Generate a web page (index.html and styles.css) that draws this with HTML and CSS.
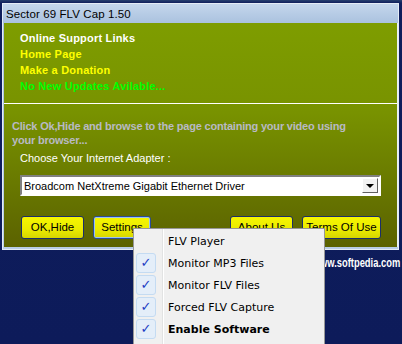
FILE: index.html
```html
<!DOCTYPE html>
<html lang="en">
<head>
    <meta charset="UTF-8">
    <title>Sector 69 FLV Cap 1.50</title>
    <link rel="stylesheet" href="styles.css">
</head>
<body>
    <div class="desktop">
        <div class="window">
            <div class="titlebar">Sector 69 FLV Cap 1.50</div>
            <div class="panel">
                <div class="links">
                    <div class="links-title">Online Support Links</div>
                    <div class="link">Home Page</div>
                    <div class="link">Make a Donation</div>
                    <div class="updates">No New Updates Avilable...</div>
                </div>
                <div class="separator"></div>
                <div class="hint">Click Ok,Hide and browse to the page containing your video using<br>your browser...</div>
                <div class="adapter-label">Choose Your Internet Adapter :</div>
                <div class="combo">
                    <span class="combo-text">Broadcom NetXtreme Gigabit Ethernet Driver</span>
                    <span class="combo-arrow"><span class="tri"></span></span>
                </div>
                <div class="buttons">
                    <div class="btn btn-ok">OK,Hide</div>
                    <div class="btn btn-settings focused">Settings</div>
                    <div class="btn btn-about">About Us</div>
                    <div class="btn btn-terms">Terms Of Use</div>
                </div>
            </div>
        </div>
        <div class="watermark-url">www.softpedia.com</div>
        <div class="menu">
            <div class="menu-item"><span class="gutter"></span><span class="label">FLV Player</span></div>
            <div class="menu-item"><span class="gutter"><span class="check">&#10003;</span></span><span class="label">Monitor MP3 Files</span></div>
            <div class="menu-item"><span class="gutter"><span class="check">&#10003;</span></span><span class="label">Monitor FLV Files</span></div>
            <div class="menu-item"><span class="gutter"><span class="check">&#10003;</span></span><span class="label">Forced FLV Capture</span></div>
            <div class="menu-item"><span class="gutter"><span class="check">&#10003;</span></span><span class="label bold">Enable Software</span></div>
            <div class="menu-line"></div>
        </div>
    </div>
</body>
</html>
```

FILE: styles.css
```css
body {
    margin: 0;
    background-color: #0d1b5a;
    font-family: "Liberation Sans", Arial, sans-serif;
    overflow: hidden;
}
.desktop {
    position: relative;
    width: 402px;
    height: 344px;
    padding-top: 3px;
    box-sizing: border-box;
    background: linear-gradient(180deg, #27406e 0, #0f1e5c 3px, #0d1b5a 100%);
}
.window {
    margin-left: 2px;
    width: 394px;
    border: 1px solid #e4ecf6;
    padding: 0 0 2px 1px;
    background: linear-gradient(180deg, #c4d6ec 0, #a9c1de 20px, #b8cde6 100%);
}
.titlebar {
    height: 19px;
    line-height: 20px;
    padding-left: 2px;
    font-size: 11.5px;
    letter-spacing: 0.1px;
    color: #000;
}
.panel {
    height: 224px;
    box-sizing: border-box;
    background: linear-gradient(180deg, #7e9d00 0, #789200 40%, #5b6200 100%);
    border-right: 1px solid #e8f0f8;
}
.links {
    padding: 7px 0 0 16px;
    font-size: 11px;
    font-weight: bold;
    line-height: 16px;
    letter-spacing: 0.2px;
}
.links-title {
    color: #fff;
}
.link {
    color: #ffff00;
}
.updates {
    color: #00ff00;
}
.separator {
    margin-top: 9px;
    height: 1px;
    background-color: #fff;
}
.hint {
    margin: 15px 0 0 8px;
    font-size: 11px;
    font-weight: bold;
    line-height: 14px;
    letter-spacing: -0.2px;
    color: #b9bac4;
    white-space: nowrap;
}
.adapter-label {
    margin: 4px 0 0 16px;
    font-size: 11px;
    line-height: 14px;
    color: #fff;
}
.combo {
    margin: 10px 0 0 16px;
    width: 361px;
    height: 21px;
    box-sizing: border-box;
    background-color: #fff;
    border: 2px solid;
    border-color: #808080 #fff #fff #808080;
    display: flex;
    align-items: center;
    justify-content: space-between;
    padding: 0 1px 0 2px;
}
.combo-text {
    font-size: 11px;
    color: #000;
}
.combo-arrow {
    width: 16px;
    height: 15px;
    box-sizing: border-box;
    background-color: #f2f2f2;
    border: 1px solid;
    border-color: #fff #606060 #606060 #fff;
    display: flex;
    align-items: center;
    justify-content: center;
}
.tri {
    width: 0;
    height: 0;
    border-left: 4px solid transparent;
    border-right: 4px solid transparent;
    border-top: 4px solid #000;
}
.buttons {
    display: flex;
    gap: 9px;
    margin-top: 20px;
    padding: 0 16px 0 17px;
}
.btn {
    height: 23px;
    line-height: 21px;
    box-sizing: border-box;
    text-align: center;
    font-size: 11.5px;
    color: #000;
    background: linear-gradient(180deg, #f6f600 0, #eaea00 60%, #d6d600 100%);
    border: 1px solid #1c2f6a;
    border-radius: 3px;
}
.btn-ok {
    width: 63px;
}
.btn-settings {
    width: 58px;
}
.btn-about {
    width: 63px;
    margin-left: auto;
}
.btn-terms {
    width: 79px;
}
.btn.focused {
    box-shadow: 0 0 0 1px #9cc4ee inset;
    border-color: #2a4a9a;
}
.watermark-url {
    position: absolute;
    right: 2px;
    top: 256px;
    font-family: "Liberation Sans", Arial, sans-serif;
    font-size: 12px;
    font-weight: bold;
    color: #fff;
    transform: scaleX(0.78);
    transform-origin: right center;
}
.menu {
    position: absolute;
    left: 133px;
    top: 228px;
    width: 192px;
    height: 130px;
    box-sizing: border-box;
    padding-top: 1px;
    background-color: #f0f0f0;
    border: 1px solid #979797;
    font-family: "DejaVu Sans", sans-serif;
    font-size: 11px;
    color: #000;
}
.menu-line {
    position: absolute;
    left: 28px;
    top: 0;
    bottom: 0;
    width: 1px;
    background-color: #e2e3e3;
    border-right: 1px solid #fff;
}
.menu-item {
    display: flex;
    align-items: center;
    height: 22px;
}
.gutter {
    width: 34px;
    padding-left: 2px;
    box-sizing: border-box;
    display: flex;
    align-items: center;
}
.check {
    width: 20px;
    height: 20px;
    box-sizing: border-box;
    border: 1px solid #c4dbf2;
    border-radius: 3px;
    background-color: #e4eef9;
    color: #1c3fc4;
    font-size: 13px;
    line-height: 18px;
    text-align: center;
}
.label.bold {
    font-weight: bold;
}
```
